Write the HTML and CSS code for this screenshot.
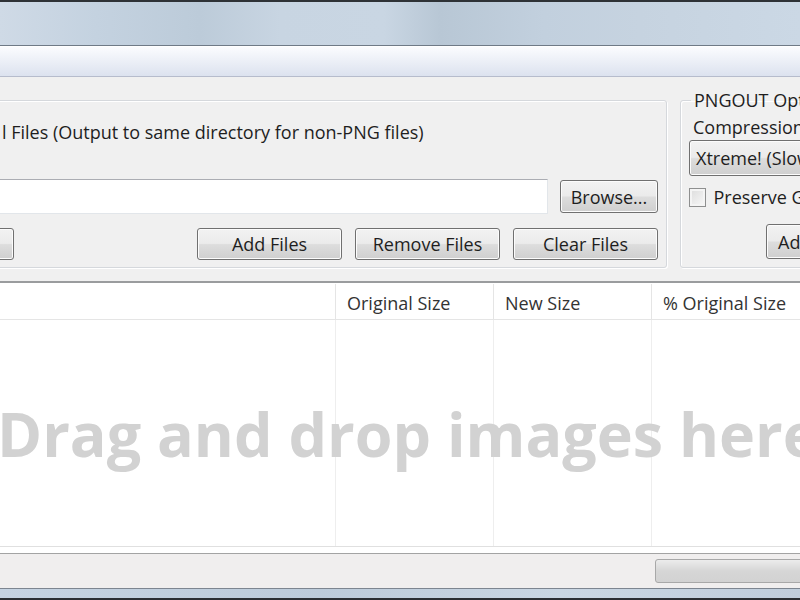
FILE: index.html
```html
<!DOCTYPE html>
<html lang="en">
<head>
    <meta charset="UTF-8">
    <title>PNG Optimizer</title>
    <link rel="stylesheet" href="styles.css">
</head>
<body>
<div class="frame-top"></div>
<div class="titlebar"></div>
<div class="menubar"></div>

<div class="panel">
    <div class="group group-files">
        <div class="group-line">l Files (Output to same directory for non-PNG files)</div>
        <div class="row row-path">
            <div class="textbox"></div>
            <button class="btn btn-browse">Browse...</button>
        </div>
        <div class="row row-actions">
            <button class="btn btn-cut"></button>
            <div class="btn-set">
                <button class="btn">Add Files</button>
                <button class="btn">Remove Files</button>
                <button class="btn">Clear Files</button>
            </div>
        </div>
    </div>

    <fieldset class="group group-options">
        <legend>PNGOUT Options</legend>
        <div class="opt-label">Compression</div>
        <div class="combo">Xtreme! (Slow)</div>
        <label class="check"><span class="check-box"></span>Preserve GIF</label>
        <button class="btn btn-add">Add</button>
    </fieldset>
</div>

<div class="list">
    <div class="list-head cols">
        <div class="col"></div>
        <div class="col">Original Size</div>
        <div class="col">New Size</div>
        <div class="col">% Original Size</div>
    </div>
    <div class="list-body">
        <div class="cols cols-body">
            <div class="col"></div>
            <div class="col"></div>
            <div class="col"></div>
            <div class="col"></div>
        </div>
        <div class="drop-hint">Drag and drop images here</div>
    </div>
    <div class="list-foot"></div>
</div>

<div class="statusbar">
    <div class="progress"></div>
</div>
<div class="frame-bottom"></div>
</body>
</html>
```

FILE: styles.css
```css
html, body {
    margin: 0;
    width: 800px;
    height: 600px;
    overflow: hidden;
}

body {
    background: #f0f0f0;
    font-family: "Open Sans", "Noto Sans", sans-serif;
    font-size: 18px;
    color: #1e1e1e;
}

/* window chrome */
.frame-top {
    height: 2px;
    background: #2e3236;
}

.titlebar {
    height: 43px;
    border-bottom: 1px solid #6f7a86;
    background: linear-gradient(90deg, #cfdae6 0%, #c4d2e0 12%, #bccbd9 25%, #c8d5e2 35%, #c9d6e3 48%, #b8c7d5 55%, #c2d0de 68%, #c6d3e0 80%, #cbd8e5 100%);
}

.menubar {
    height: 31px;
    border-top: 1px solid #ffffff;
    border-bottom: 1px solid #b6bccc;
    background: linear-gradient(#fbfcfe, #dce2ef);
    box-sizing: border-box;
}

/* top panel */
.panel {
    height: 204px;
    display: flex;
    align-items: flex-start;
    padding-top: 23px;
    box-sizing: border-box;
}

.group {
    border: 1px solid #d5d8dc;
    border-radius: 3px;
    box-shadow: inset 1px 1px 0 #ffffff, 1px 1px 0 #ffffff;
    box-sizing: border-box;
    height: 168px;
    flex-shrink: 0;
}

.group-files {
    margin-left: -20px;
    width: 687px;
    padding: 0 8px 0 21px;
}

.group-line {
    margin-top: 19px;
    line-height: 24px;
}

.row {
    display: flex;
    align-items: center;
}

.row-path {
    margin-top: 35px;
    gap: 12px;
}

.textbox {
    flex: 1;
    margin-left: -40px;
    height: 35px;
    background: #fff;
    border: 1px solid #e2e6ea;
    border-top-color: #abadb3;
    box-sizing: border-box;
}

.row-actions {
    margin-top: 14px;
}

.btn-set {
    margin-left: auto;
    display: flex;
    gap: 13px;
}

.btn {
    height: 32px;
    width: 145px;
    padding: 0;
    font-family: inherit;
    font-size: 18px;
    color: #1e1e1e;
    border: 1px solid #707070;
    border-radius: 3px;
    background: linear-gradient(#f2f2f2 0%, #ebebeb 48%, #dddddd 52%, #cfcfcf 100%);
    box-shadow: inset 0 0 0 1px #fcfcfc;
}

.btn-browse {
    width: 98px;
    height: 33px;
}

.btn-cut {
    margin-left: -40px;
    width: 52px;
}

/* options group */
fieldset.group-options {
    margin: -10px 0 0 13px;
    width: 140px;
    height: 178px;
    padding: 0 0 0 8px;
    min-width: 0;
    white-space: nowrap;
}

.group-options legend {
    padding: 0 3px;
    margin-left: 2px;
    line-height: 20px;
}

.opt-label {
    margin-top: 6px;
    line-height: 22px;
    padding-left: 4px;
}

.combo {
    margin-top: 2px;
    height: 36px;
    line-height: 34px;
    width: 160px;
    padding-left: 6px;
    box-sizing: border-box;
    border: 1px solid #707070;
    border-radius: 3px;
    background: linear-gradient(#f2f2f2 0%, #ebebeb 48%, #dddddd 52%, #cfcfcf 100%);
    box-shadow: inset 0 0 0 1px #fcfcfc;
}

.check {
    display: flex;
    align-items: center;
    margin-top: 11px;
    gap: 7px;
    line-height: 20px;
}

.check-box {
    width: 18px;
    height: 19px;
    box-sizing: border-box;
    border: 1px solid #8e8f8f;
    background: linear-gradient(135deg, #dcdcdc, #f8f8f8);
    box-shadow: inset 0 0 0 2px #f4f4f4;
}

.btn-add {
    display: block;
    margin: 17px 0 0 77px;
    width: 80px;
    height: 35px;
    text-align: left;
    padding-left: 11px;
}

/* list view */
.list {
    border-top: 2px solid #9a9c9e;
    background: #fff;
}

.cols {
    display: grid;
    grid-template-columns: 336px 158px 158px 158px;
}

.col {
    border-right: 1px solid #e5e5e5;
}

.list-head {
    height: 36px;
    border-bottom: 1px solid #e5e5e5;
    box-sizing: border-box;
    margin-top: 1px;
}

.list-head .col {
    padding: 2px 0 0 11px;
    line-height: 34px;
    color: #333;
}

.list-body {
    position: relative;
    height: 227px;
    border-bottom: 1px solid #e0e0e0;
    box-sizing: border-box;
}

.cols-body {
    height: 100%;
}

.cols-body .col {
    border-right-color: #eeeeee;
}

.drop-hint {
    position: absolute;
    top: 0;
    bottom: 0;
    left: -3px;
    display: flex;
    align-items: center;
    white-space: nowrap;
    font-weight: bold;
    font-size: 61px;
    color: #d2d2d2;
}

.list-foot {
    height: 6px;
    border-bottom: 1px solid #a3a3a3;
}

/* status */
.statusbar {
    height: 34px;
    background: #f0eeee;
    padding: 5px 0 0 655px;
    box-sizing: border-box;
}

.progress {
    height: 24px;
    width: 160px;
    border: 1px solid #a8a8a8;
    border-radius: 3px;
    box-sizing: border-box;
    background: linear-gradient(#ececec, #d6d6d6 50%, #d2d2d2 100%);
}

.frame-bottom {
    height: 9px;
    border-top: 1px solid #7d8590;
    border-bottom: 3px solid #2a2e33;
    background: linear-gradient(90deg, #c5d3e2, #bccbda 40%, #c9d6e3 70%, #c0cedc);
}
```
